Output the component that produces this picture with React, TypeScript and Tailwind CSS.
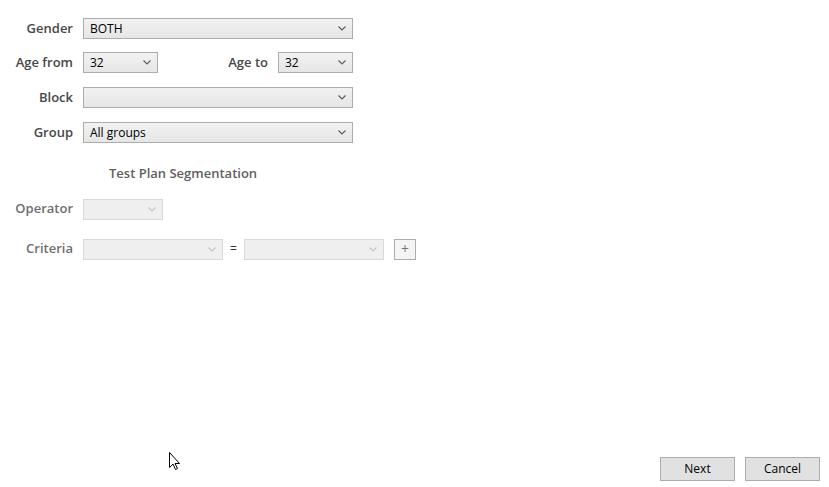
import React from 'react';

const font = { fontFamily: '"Open Sans", "Noto Sans", sans-serif' };

const Chevron: React.FC<{ disabled?: boolean }> = ({ disabled }) => (
  <svg width="8" height="5" viewBox="0 0 8 5" className="shrink-0">
    <path d="M0.5 0.5 L4 4 L7.5 0.5" fill="none" stroke={disabled ? '#c4c4c4' : '#5a5a5a'} strokeWidth="1.1" />
  </svg>
);

const Combo: React.FC<{ value?: string; width: string; disabled?: boolean }> = ({ value, width, disabled }) => (
  <div
    className={`flex h-[21px] items-center justify-between pl-[6px] pr-[6px] text-[12px] ${width} ${
      disabled
        ? 'border border-[#d9d9d9] bg-[#efefef] text-[#888]'
        : 'border border-[#acacac] bg-gradient-to-b from-[#f2f2f2] to-[#e6e6e6] text-black'
    }`}
  >
    <span className="leading-none">{value}</span>
    <Chevron disabled={disabled} />
  </div>
);

const Label: React.FC<{ text: string; disabled?: boolean; className?: string }> = ({ text, disabled, className }) => (
  <span
    className={`text-right text-[13px] font-semibold ${disabled ? 'text-[#6e6e6e]' : 'text-[#474747]'} ${
      className ?? 'w-[73px]'
    }`}
  >
    {text}
  </span>
);

const Button: React.FC<{ text: string }> = ({ text }) => (
  <button className="flex h-[24px] w-[75px] items-center justify-center border border-[#adadad] bg-[#e1e1e1] text-[12px] text-black">
    {text}
  </button>
);

export default function App() {
  return (
    <div className="relative flex h-[487px] w-[829px] flex-col bg-white" style={font}>
      <div className="flex flex-col pt-[18px]">
        <div className="flex items-center gap-[10px]">
          <Label text="Gender" />
          <Combo value="BOTH" width="w-[270px]" />
        </div>
        <div className="mt-[13px] flex items-center gap-[10px]">
          <Label text="Age from" />
          <Combo value="32" width="w-[75px]" />
          <Label text="Age to" className="w-[100px]" />
          <Combo value="32" width="w-[75px]" />
        </div>
        <div className="mt-[14px] flex items-center gap-[10px]">
          <Label text="Block" />
          <Combo width="w-[270px]" />
        </div>
        <div className="mt-[14px] flex items-center gap-[10px]">
          <Label text="Group" />
          <Combo value="All groups" width="w-[270px]" />
        </div>
        <div className="mt-[21px] pl-[109px] text-[13px] font-semibold text-[#5f5f5f]">Test Plan Segmentation</div>
        <div className="mt-[15px] flex items-center gap-[10px]">
          <Label text="Operator" disabled />
          <Combo width="w-[80px]" disabled />
        </div>
        <div className="mt-[19px] flex items-center">
          <Label text="Criteria" disabled />
          <div className="ml-[10px] flex items-center gap-[7px]">
            <Combo width="w-[140px]" disabled />
            <span className="w-[7px] text-center text-[12px] text-[#333]">=</span>
            <Combo width="w-[140px]" disabled />
          </div>
          <button className="ml-[10px] flex h-[21px] w-[22px] items-center justify-center border border-[#adadad] bg-[#f4f4f4] text-[14px] leading-none text-[#777]">
            +
          </button>
        </div>
      </div>
      <div className="mt-auto flex justify-end gap-[10px] pb-[6px] pr-[9px]">
        <Button text="Next" />
        <Button text="Cancel" />
      </div>
      <svg className="absolute left-[169px] top-[452px]" width="12" height="19" viewBox="0 0 12 19">
        <path d="M0.5 0.5 L0.5 15.5 L4 12 L6.5 17.5 L8.5 16.5 L6 11.5 L10.5 11.5 Z" fill="white" stroke="black" strokeWidth="1" />
      </svg>
    </div>
  );
}
